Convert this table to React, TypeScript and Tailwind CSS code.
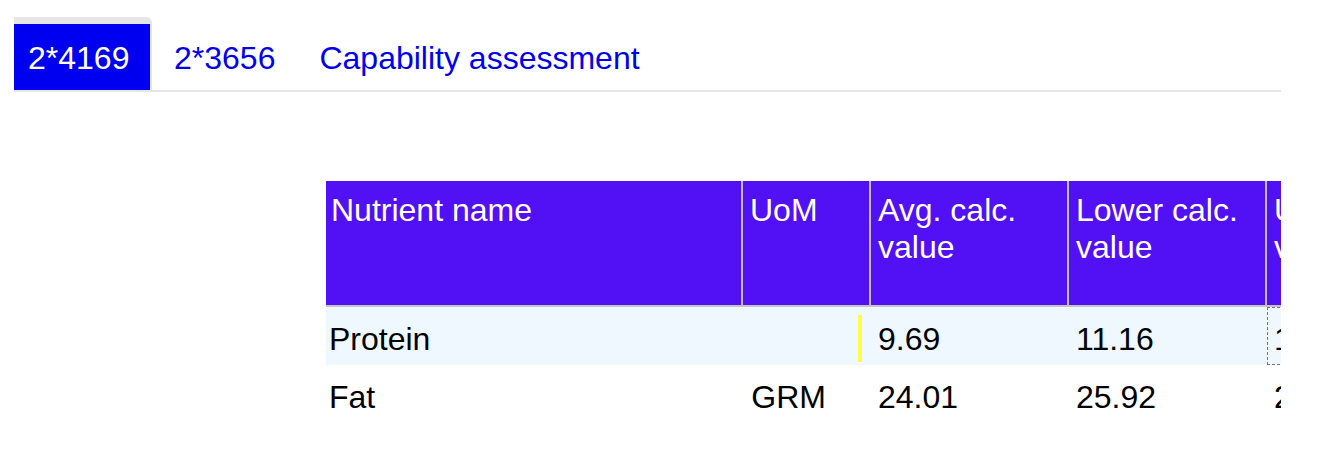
import React from "react";

type Row = {
  name: string;
  uom: string;
  avg: string;
  lower: string;
  upper: string;
  active?: boolean;
};

const rows: Row[] = [
  { name: "Protein", uom: "", avg: "9.69", lower: "11.16", upper: "12.63", active: true },
  { name: "Fat", uom: "GRM", avg: "24.01", lower: "25.92", upper: "27.83" },
];

const tabs = ["2*4169", "2*3656", "Capability assessment"];

const App: React.FC = () => {
  return (
    <div className="w-[1334px] h-[470px] bg-white pl-[14px] pt-[17px] font-['Liberation_Sans',Arial,sans-serif] text-[32px] leading-[37px]">
      <div className="w-[1267px]">
        {/* Tabs */}
        <div className="flex items-end border-b-2 border-[#e6e6e6]">
          {tabs.map((tab, i) =>
            i === 0 ? (
              <div
                key={tab}
                className="flex items-center w-[138px] h-[73px] pl-[14px] pt-[2px] bg-[#0000f0] text-white border-t-[7px] border-r-2 border-[#e6e6e6] rounded-tr-[6px]"
              >
                {tab}
              </div>
            ) : (
              <div key={tab} className="flex items-center h-[66px] px-[22px] pt-[2px] text-[#0000ee]">
                {tab}
              </div>
            )
          )}
        </div>

        {/* Table */}
        <div className="mt-[89px] ml-[312px] overflow-hidden">
          <div className="w-[1200px]">
            <div className="grid grid-cols-[415px_128px_198px_198px_200px] h-[126px] bg-[#5210f5] text-white border-b-2 border-[#c3c3c8]">
              <div className="pl-[5px] pt-[11px]">Nutrient name</div>
              <div className="border-l-2 border-[#c0c0c0] pl-[7px] pt-[11px]">UoM</div>
              <div className="border-l-2 border-[#c0c0c0] pl-[7px] pt-[11px]">
                Avg. calc.
                <br />
                value
              </div>
              <div className="border-l-2 border-[#c0c0c0] pl-[7px] pt-[11px]">
                Lower calc.
                <br />
                value
              </div>
              <div className="border-l-2 border-[#c0c0c0] pl-[7px] pt-[11px]">
                Upper calc.
                <br />
                value
              </div>
            </div>

            {rows.map((row) => (
              <div
                key={row.name}
                className={`grid grid-cols-[415px_128px_198px_198px_200px] h-[58px] text-black ${
                  row.active ? "bg-[#f0f8ff]" : "bg-white"
                }`}
              >
                <div className="pl-[3px] pt-[14px]">{row.name}</div>
                <div className="border-l-2 border-transparent flex justify-end">
                  {row.active ? (
                    <div className="mt-[8px] mr-[7px] w-[4px] h-[47px] bg-[#fdfd45]" />
                  ) : (
                    <div className="pr-[43px] pt-[14px]">{row.uom}</div>
                  )}
                </div>
                <div className="border-l-2 border-transparent pl-[7px] pt-[14px]">{row.avg}</div>
                <div className="border-l-2 border-transparent pl-[7px] pt-[14px]">{row.lower}</div>
                <div className="border-l-2 border-transparent">
                  {row.active ? (
                    <div className="h-full border border-dashed border-[#777] pl-[6px] pt-[13px]">
                      {row.upper}
                    </div>
                  ) : (
                    <div className="pl-[7px] pt-[14px]">{row.upper}</div>
                  )}
                </div>
              </div>
            ))}
          </div>
        </div>
      </div>
    </div>
  );
};

export default App;
